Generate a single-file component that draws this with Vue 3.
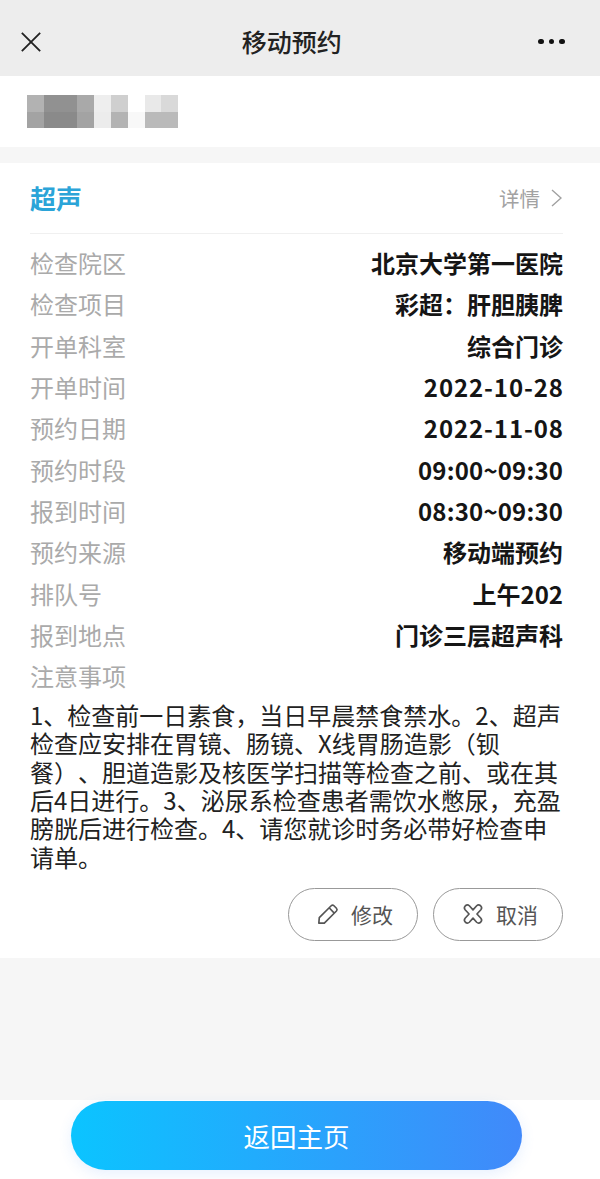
<script setup>
const mosaic = ['#b2b2b2','#919191','#919191','#a9a9a9','#eeeeee','#cfcfcf','#ffffff','#e9e9e9','#d9d9d9',
  '#a3a3a3','#8a8a8a','#8a8a8a','#a3a3a3','#ececec','#b3b3b3','#f8f8f8','#bababa','#bababa']
const rows = [
  { label: '检查院区', value: '北京大学第一医院' },
  { label: '检查项目', value: '彩超：肝胆胰脾' },
  { label: '开单科室', value: '综合门诊' },
  { label: '开单时间', value: '2022-10-28', kind: 'date' },
  { label: '预约日期', value: '2022-11-08', kind: 'date' },
  { label: '预约时段', value: '09:00~09:30', kind: 'time' },
  { label: '报到时间', value: '08:30~09:30', kind: 'time' },
  { label: '预约来源', value: '移动端预约' },
  { label: '排队号', value: '上午202' },
  { label: '报到地点', value: '门诊三层超声科' },
]
</script>

<template>
  <div class="page">
    <header class="nav">
      <svg class="close" viewBox="0 0 24 24"><path d="M2 2 L22 22 M22 2 L2 22"/></svg>
      <h1>移动预约</h1>
      <div class="dots"><i></i><i></i><i></i></div>
    </header>
    <section class="name">
      <div class="mosaic"><span v-for="(c,i) in mosaic" :key="i" :style="{background:c}"></span></div>
    </section>
    <section class="card">
      <div class="head">
        <span class="type">超声</span>
        <span class="more">详情
          <svg viewBox="0 0 12 20"><path d="M1 1 L11 10 L1 19"/></svg>
        </span>
      </div>
      <dl class="rows">
        <div v-for="r in rows" :key="r.label" class="row"><dt>{{ r.label }}</dt><dd :class="r.kind">{{ r.value }}</dd></div>
        <div class="row"><dt>注意事项</dt></div>
      </dl>
      <p class="note">1、检查前一日素食，当日早晨禁食禁水。2、超声<br>检查应安排在胃镜、肠镜、X线胃肠造影（钡<br>餐）、胆道造影及核医学扫描等检查之前、或在其<br>后4日进行。3、泌尿系检查患者需饮水憋尿，充盈<br>膀胱后进行检查。4、请您就诊时务必带好检查申<br>请单。</p>
      <div class="actions">
        <button>
          <svg viewBox="0 0 24 24"><path d="M2 22 L2.5 16 L15.5 3 Q17 1.6 18.5 3 L21.2 5.7 Q22.6 7.2 21.2 8.7 L8 22 Z M13.5 5.5 L18.8 11"/></svg>
          修改
        </button>
        <button>
          <svg viewBox="0 0 24 24"><path d="M8 3 L12 7.5 L16 3 Q18 1.2 20.3 3 Q22.4 5.2 20.6 7.3 L16.3 12 L20.6 16.7 Q22.4 18.8 20.3 21 Q18 22.8 16 21 L12 16.5 L8 21 Q6 22.8 3.7 21 Q1.6 18.8 3.4 16.7 L7.7 12 L3.4 7.3 Q1.6 5.2 3.7 3 Q6 1.2 8 3 Z"/></svg>
          取消
        </button>
      </div>
    </section>
    <div class="blank"></div>
    <footer class="foot"><button class="home">返回主页</button></footer>
  </div>
</template>

<style>
html, body { margin: 0; background: #fff; }
</style>
<style scoped>
.page { width: 600px; height: 1179px; overflow: hidden; display: flex; flex-direction: column; background: #f6f6f6;
  font-family: "Noto Sans CJK SC", "Liberation Sans", sans-serif; text-spacing-trim: space-all; }
.nav { height: 76px; flex: none; background: #ededed; display: flex; align-items: center; justify-content: space-between; padding: 8px 35px 0 20px; box-sizing: border-box; }
.close { width: 22px; height: 22px; fill: none; stroke: #222; stroke-width: 2; }
.nav h1 { margin: -3px 0 0 3px; font-size: 25px; font-weight: 500; color: #222; line-height: 32px; }
.dots { display: flex; gap: 5px; margin-top: -1px; }
.dots i { width: 5.5px; height: 5.5px; border-radius: 50%; background: #111; }
.name { height: 71px; flex: none; background: #fff; box-sizing: border-box; padding: 19px 0 0 27px; }
.mosaic { display: grid; grid-template-columns: repeat(9, 16.8px); grid-template-rows: repeat(2, 16.5px); width: 152px; }
.card { height: 795px; flex: none; margin-top: 16px; background: #fff; box-sizing: border-box; padding: 0 37px 0 30px; display: flex; flex-direction: column; }
.head { height: 70px; flex: none; display: flex; align-items: center; justify-content: space-between; border-bottom: 1px solid #f0f0f0; }
.type { font-size: 26px; font-weight: 700; color: #2ba4d8; line-height: 34px; }
.more { display: flex; align-items: center; gap: 11px; font-size: 20.5px; color: #a2a2a2; margin-right: 1px; }
.more svg { width: 11px; height: 18px; fill: none; stroke: #a0a0a0; stroke-width: 1.5; }
.rows { margin: 8px 0 0; display: flex; flex-direction: column; }
.row { height: 41.3px; display: flex; align-items: center; justify-content: space-between; font-size: 24px; }
.row dt { color: #aaa; }
.row dd { margin: 0; font-weight: 700; color: #151515; }
.row dd.date { letter-spacing: .9px; margin-right: -.9px; }
.row dd.time { letter-spacing: .2px; margin-right: -.2px; }
.note { margin: 4.5px -10px 0 0; font-size: 24px; line-height: 28.4px; color: #222; white-space: nowrap; }
.actions { display: flex; justify-content: flex-end; gap: 15px; margin-top: 16.5px; }
.actions button { width: 130px; height: 53px; border: 1px solid #999; border-radius: 27px; background: #fff; display: flex; align-items: center; justify-content: center; gap: 12px; font: inherit; font-size: 21px; color: #555; padding: 0 0 0 4px; box-sizing: border-box; }
.actions svg { width: 22px; height: 22px; fill: none; stroke: #555; stroke-width: 1.8; stroke-linejoin: round; }
.blank { flex: 1; }
.foot { height: 79px; flex: none; background: #fff; display: flex; justify-content: center; padding: 1px 7px 0 0; box-sizing: border-box; }
.home { width: 451px; height: 69px; border: 0; border-radius: 35px; background: linear-gradient(90deg, #0bc4ff, #4189fa); color: #fff; font: inherit; font-size: 26.5px; padding: 0; box-shadow: 0 4px 14px rgba(60,130,250,.12); }
</style>
